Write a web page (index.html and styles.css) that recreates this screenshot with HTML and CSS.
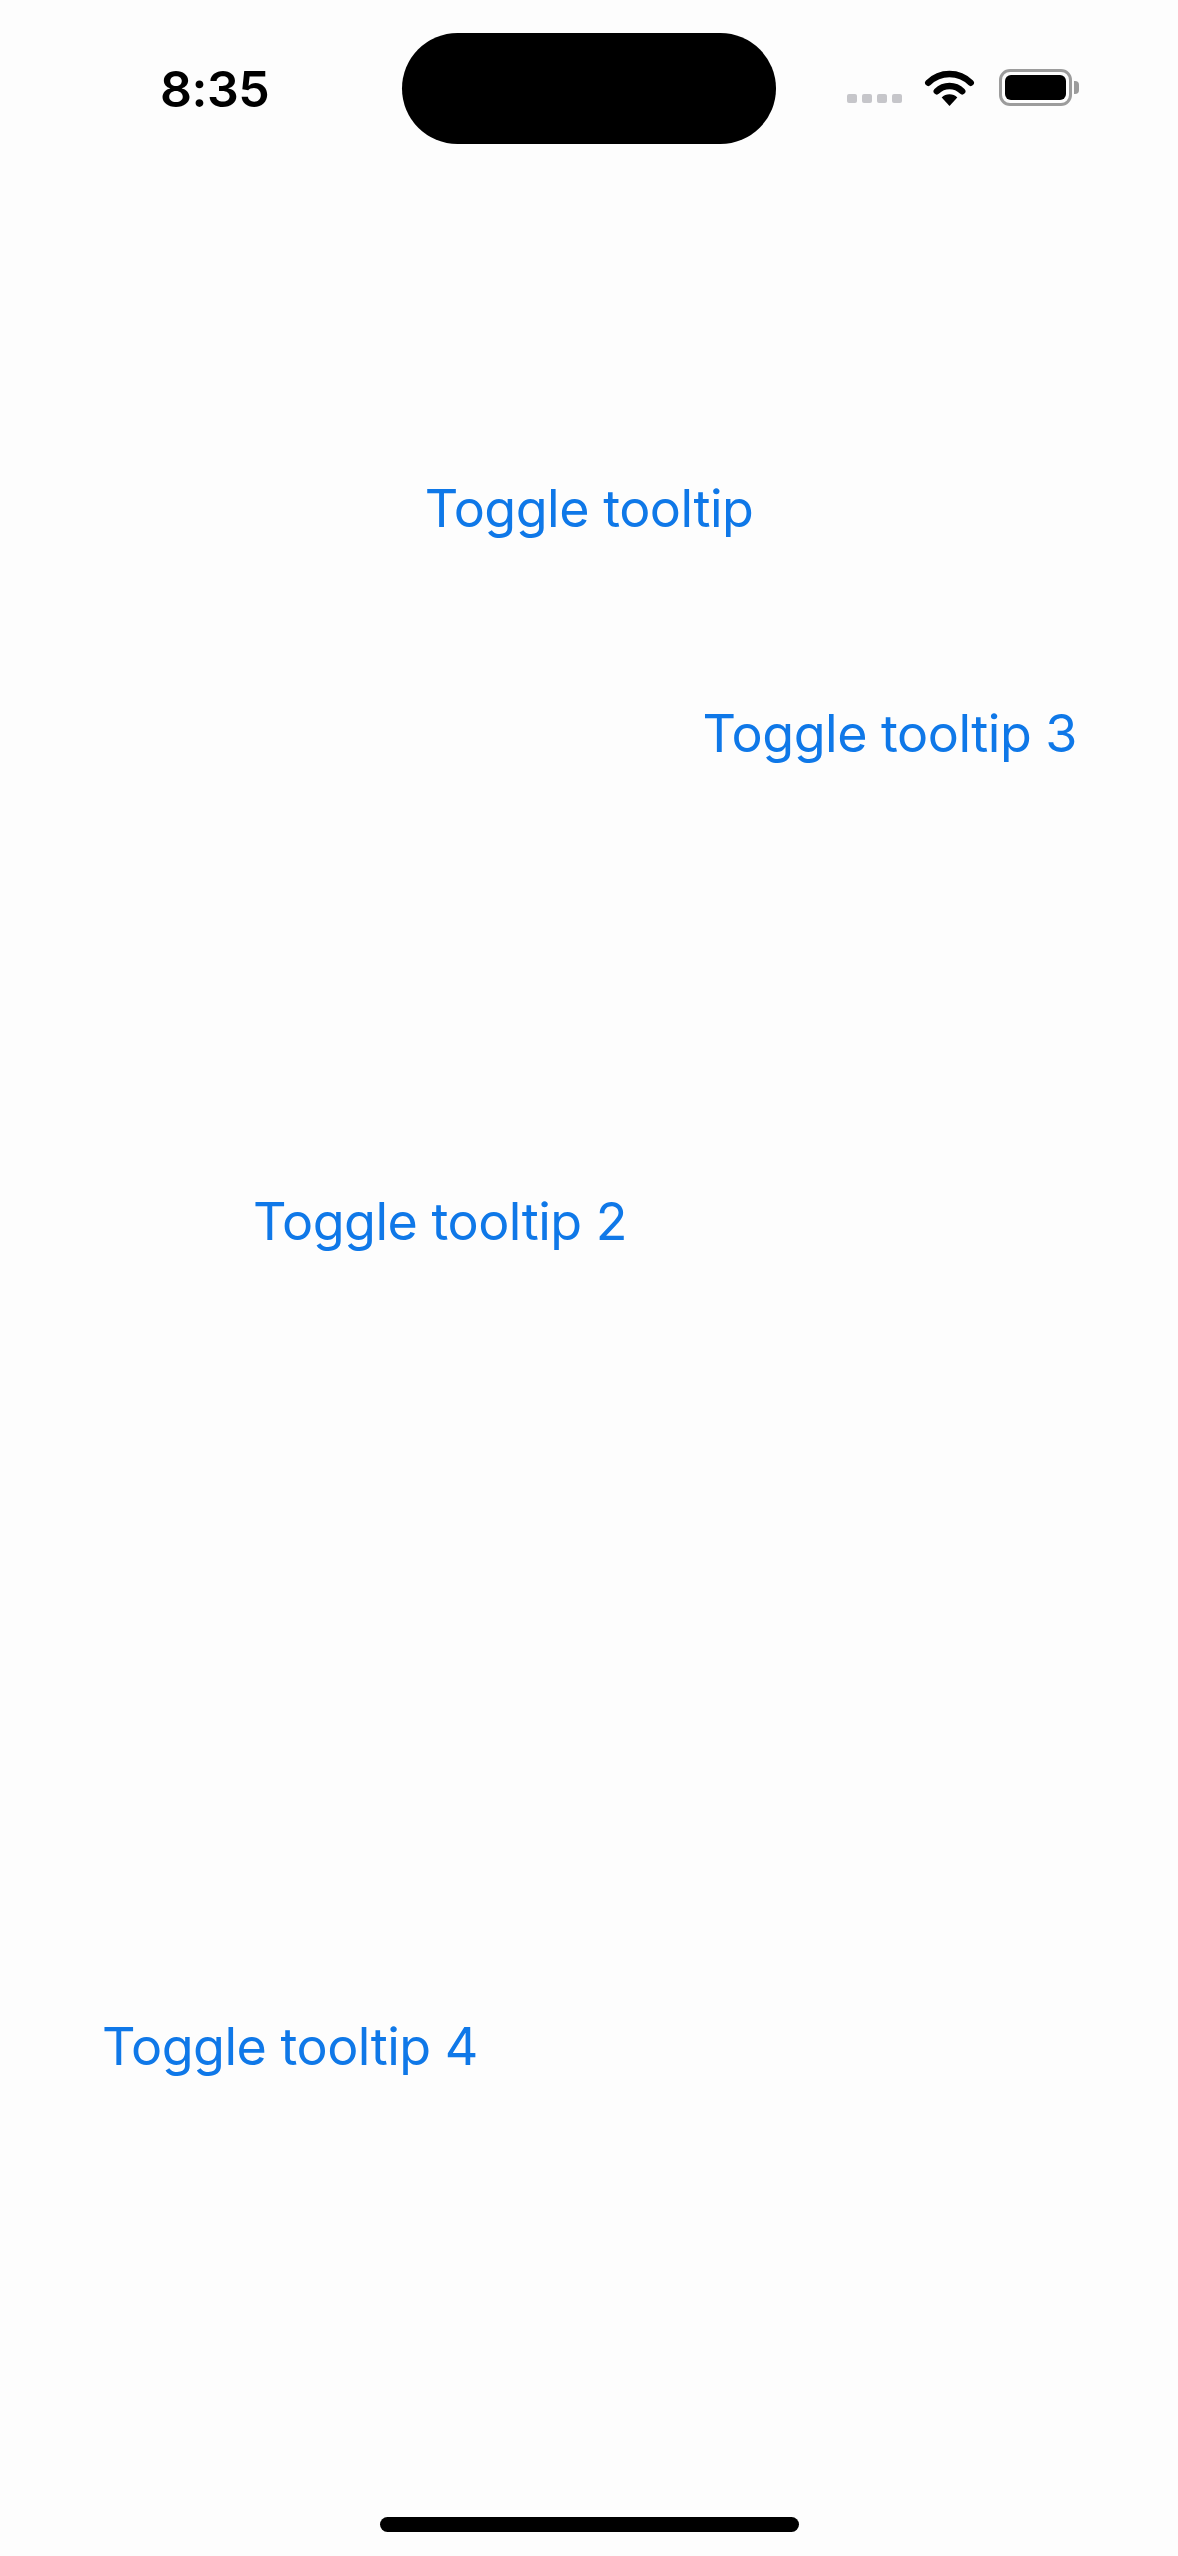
FILE: index.html
```html
<!DOCTYPE html>
<html lang="en">
<head>
<meta charset="utf-8">
<title>Tooltips</title>
<link rel="stylesheet" href="styles.css">
</head>
<body>
<div class="screen">
  <header class="status-bar">
    <div class="time">8:35</div>
    <div class="island"></div>
    <div class="signal">
      <span class="bar"></span><span class="bar"></span><span class="bar"></span><span class="bar"></span>
    </div>
    <svg class="wifi" width="51" height="37" viewBox="0 0 51 37" aria-hidden="true">
      <path d="M4.3 13.8 A30 30 0 0 1 46.7 13.8" fill="none" stroke="#000" stroke-width="6.5" stroke-linecap="round"/>
      <path d="M12.8 22.3 A18 18 0 0 1 38.2 22.3" fill="none" stroke="#000" stroke-width="6.5" stroke-linecap="round"/>
      <path d="M25.5 37 L17.7 28.6 A11 11 0 0 1 33.3 28.6 Z" fill="#000"/>
    </svg>
    <div class="battery">
      <div class="battery-body"><div class="battery-fill"></div></div>
      <div class="battery-cap"></div>
    </div>
  </header>

  <main class="content">
    <button class="toggle toggle-1" type="button">Toggle tooltip</button>
    <button class="toggle toggle-3" type="button">Toggle tooltip 3</button>
    <button class="toggle toggle-2" type="button">Toggle tooltip 2</button>
    <button class="toggle toggle-4" type="button">Toggle tooltip 4</button>
  </main>

  <div class="home-indicator"></div>
</div>
</body>
</html>
```

FILE: styles.css
```css
* { box-sizing: border-box; }

html, body {
  margin: 0;
  padding: 0;
  background: #fdfdfd;
}

.screen {
  width: 1178px;
  height: 2556px;
  display: flex;
  flex-direction: column;
  font-family: Inter, "Liberation Sans", sans-serif;
  background: #fdfdfd;
}

.status-bar {
  height: 177px;
  display: flex;
  align-items: center;
  padding-left: 160px;
}

.time {
  width: 242px;
  font-size: 50px;
  font-weight: 600;
  color: #000;
  letter-spacing: -0.5px;
  line-height: 1;
}

.island {
  width: 374px;
  height: 111px;
  border-radius: 56px;
  background: #000;
}

.signal {
  display: flex;
  gap: 5px;
  margin-left: 71px;
  margin-top: 19px;
}

.signal .bar {
  width: 10px;
  height: 9px;
  border-radius: 2px;
  background: #c6c6ca;
}

.wifi {
  margin-left: 22px;
  margin-top: -2px;
}

.battery {
  margin-left: 24px;
  display: flex;
  align-items: center;
  margin-top: -2px;
}

.battery-body {
  width: 73px;
  height: 37px;
  border: 3px solid #9c9c9c;
  border-radius: 11px;
  padding: 3px;
}

.battery-fill {
  width: 100%;
  height: 100%;
  background: #000;
  border-radius: 6px;
}

.battery-cap {
  width: 5px;
  height: 13px;
  margin-left: 2px;
  background: #9c9c9c;
  border-radius: 0 4px 4px 0;
}

.content {
  display: flex;
  flex-direction: column;
}

.toggle {
  font-family: Inter, "Liberation Sans", sans-serif;
  font-size: 52px;
  letter-spacing: -0.5px;
  line-height: 64px;
  color: #0f78e8;
  background: none;
  border: 0;
  padding: 0;
  margin: 0;
  cursor: pointer;
  align-self: flex-start;
}

.toggle-1 {
  align-self: center;
  margin-top: 300px;
}

.toggle-3 {
  align-self: flex-end;
  margin-right: 101px;
  margin-top: 161px;
}

.toggle-2 {
  margin-left: 253px;
  margin-top: 424px;
}

.toggle-4 {
  margin-left: 102px;
  margin-top: 761px;
}

.home-indicator {
  width: 419px;
  height: 15px;
  border-radius: 8px;
  background: #000;
  align-self: center;
  margin-top: auto;
  margin-bottom: 24px;
}
```
